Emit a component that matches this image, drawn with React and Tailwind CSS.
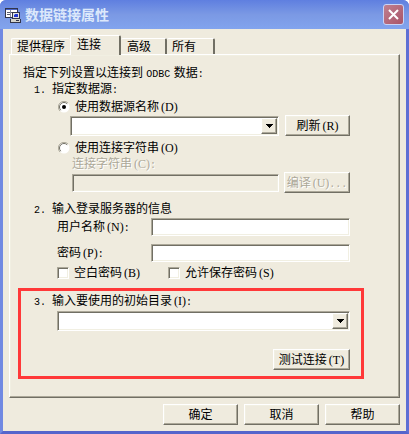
const raised =
  "border border-t-white border-l-white border-r-[#716f64] border-b-[#716f64] shadow-[inset_-1px_-1px_0_#aca899,inset_1px_1px_0_#f1efe2]";
const sunken =
  "border border-t-[#aca899] border-l-[#aca899] border-r-white border-b-white shadow-[inset_1px_1px_0_#716f64,inset_-1px_-1px_0_#f1efe2]";

const Latin = ({ children }) => (
  <span className="font-['Liberation_Mono',monospace] text-[10px] leading-none">{children}</span>
);

// Access key shown after a label
const Key = ({ children }) => (
  <span className="pl-[2px] font-['Liberation_Serif',serif] leading-none">({children})</span>
);

const Button = ({ children, className = "", disabled = false }) => (
  <button
    type="button"
    disabled={disabled}
    className={`${raised} flex items-center justify-center whitespace-nowrap bg-[#efebde] ${
      disabled ? "text-[#aca899] [text-shadow:1px_1px_0_#fff]" : ""
    } ${className}`}
  >
    <span>{children}</span>
  </button>
);

const Select = ({ id, label, className = "" }) => (
  <div className={`relative ${className}`}>
    <select
      id={id}
      aria-label={label}
      defaultValue=""
      className={`${sunken} block h-5 w-full appearance-none bg-white px-1`}
    >
      <option value=""></option>
    </select>
    <span
      className={`${raised} pointer-events-none absolute inset-y-[2px] right-[2px] flex w-4 items-center justify-center bg-[#efebde]`}
    >
      <svg width="7" height="4" viewBox="0 0 7 4" shapeRendering="crispEdges">
        <path d="M0 0h7v1H6v1H5v1H4v1H3V3H2V2H1V1H0z" />
      </svg>
    </span>
  </div>
);

const Radio = ({ label, hint, checked = false }) => (
  <label className="relative flex h-4 items-center gap-[5px]">
    <input
      type="radio"
      name="source"
      defaultChecked={checked}
      className="peer sr-only"
    />
    <svg
      width="12"
      height="12"
      viewBox="0 0 12 12"
      className="[&>circle]:opacity-0 peer-checked:[&>circle]:opacity-100"
    >
      <path d="M6 0.5a5.5 5.5 0 1 1 0 11a5.5 5.5 0 0 1 0-11" fill="#fff" />
      <path d="M2 10A5.5 5.5 0 0 1 10 2" fill="none" stroke="#aca899" />
      <path d="M2.8 9.2A4.5 4.5 0 0 1 9.2 2.8" fill="none" stroke="#716f64" />
      <circle cx="6" cy="6" r="2" fill="#000" />
    </svg>
    <span>
      {label}
      <Key>{hint}</Key>
    </span>
  </label>
);

const Checkbox = ({ label, hint }) => (
  <label className="flex h-4 items-center gap-[5px]">
    <input type="checkbox" className={`${sunken} size-3 appearance-none bg-white`} />
    <span>
      {label}
      <Key>{hint}</Key>
    </span>
  </label>
);

const TextField = ({ id, label, hint, type = "text" }) => (
  <div className="flex items-center">
    <label htmlFor={id} className="w-[94px] shrink-0">
      {label}
      <Key>{hint}</Key>
      <Latin>:</Latin>
    </label>
    <input id={id} type={type} className={`${sunken} h-[18px] min-w-0 flex-1 bg-white px-1`} />
  </div>
);

const StepTitle = ({ number, children }) => (
  <h2 className="flex h-4 items-center">
    <span className="w-[18px]">
      <Latin>{number}.</Latin>
    </span>
    <span>{children}</span>
  </h2>
);

const Tab = ({ children, active = false, className = "" }) => (
  <button
    type="button"
    role="tab"
    aria-selected={active}
    className={`rounded-t-xs border-t border-t-white bg-[#efebde] ${
      active
        ? "relative -mb-px h-5 border-l border-r-2 border-l-white border-r-[#716f64] pb-[2px]"
        : "h-4 pb-px"
    } ${className}`}
  >
    {children}
  </button>
);

const TitleBar = () => (
  <header className="flex h-[29px] items-center justify-between bg-linear-to-b from-[#5f7fe0] via-[#7b99e4] to-[#82a4ee] pr-[5px] pl-[5px]">
    <div className="flex items-center gap-1">
      <svg width="16" height="16" viewBox="0 0 16 16" shapeRendering="crispEdges">
        <path d="M0 1h13v10H0z" fill="#33364a" />
        <path d="M1 2h11v8H1z" fill="#fff" />
        <path d="M1 2h11v1H1z" fill="#4a63c4" />
        <path d="M2 5h3v1H2zM6 5h2v1H6zM2 7h3v1H2z" fill="#5a5d70" />
        <path d="M5 3h1v7H5z" fill="#8a8ea0" />
        <path d="M7 5h8v7H7z" fill="#33364a" />
        <path d="M8 6h6v5H8z" fill="#e4e4e4" />
        <path d="M9 7h4v3H9z" fill="#2438d0" />
        <path d="M9 7h1v1H9z" fill="#7fb4f5" />
        <path d="M5 12h11v4H5z" fill="#33364a" />
        <path d="M6 12h9v3H6z" fill="#d4d4cc" />
        <path d="M11 13h3v1h-3z" fill="#33364a" />
      </svg>
      <h1 className="text-sm font-bold text-[#dce8fb]">数据链接属性</h1>
    </div>
    <button
      type="button"
      aria-label="关闭"
      className="flex size-[21px] items-center justify-center rounded-[3px] border border-[#c9d3f5] bg-linear-to-br from-[#c08090] to-[#a95468]"
    >
      <svg width="11" height="11" viewBox="0 0 11 11" stroke="#fff" strokeWidth="2">
        <path d="M1 1l9 9M10 1l-9 9" />
      </svg>
    </button>
  </header>
);

export default function App() {
  return (
    <div className="overflow-hidden rounded-t-md bg-[#6c80df] font-['Liberation_Sans','Noto_Sans_CJK_SC',sans-serif] text-xs leading-4 text-black">
      <TitleBar />
      <div className="border-3 border-t-0 border-l-[#7189e2] border-r-[#5f70d4] border-b-[#5565cc] bg-[#efebde] px-[6px] pt-[6px] pb-[6px]">
        <div role="tablist" className="flex items-end pl-[2px]">
          <Tab className="w-[59px] border-l border-l-white">提供程序</Tab>
          <Tab active className="w-[51px] pr-3">连接</Tab>
          <Tab className="w-[46px] border-r-2 border-r-[#716f64] pr-2">高级</Tab>
          <Tab className="w-[48px] border-r-2 border-r-[#716f64] pr-3">所有</Tab>
        </div>

        <main className={`${raised} pt-[10px] pr-[35px] pb-[18px] pl-2`}>
          <p className="h-4 pl-[5px]">
            指定下列设置以连接到 <Latin>ODBC</Latin> 数据<Latin>:</Latin>
          </p>

          <section className="pr-[14px] pl-4">
            <StepTitle number="1">
              指定数据源<Latin>:</Latin>
            </StepTitle>
            <div className="pt-[2px] pl-6">
              <Radio label="使用数据源名称" hint="D" checked />
              <div className="flex items-center gap-[6px] pl-3">
                <Select label="数据源名称" className="flex-1" />
                <Button className="h-[21px] w-[65px]">
                  刷新<Key>R</Key>
                </Button>
              </div>
              <div className="pt-1">
                <Radio label="使用连接字符串" hint="O" />
              </div>
              <label
                htmlFor="connection"
                className="block h-4 pl-[14px] text-[#aca899] [text-shadow:1px_1px_0_#fff]"
              >
                连接字符串<Key>C</Key>
                <Latin>:</Latin>
              </label>
              <div className="flex items-center gap-[5px] pl-[14px]">
                <input
                  id="connection"
                  type="text"
                  disabled
                  className={`${sunken} h-[18px] min-w-0 flex-1 bg-[#efebde]`}
                />
                <Button disabled className="h-[21px] w-[66px]">
                  编译<Key>U</Key>
                  <Latin>...</Latin>
                </Button>
              </div>
            </div>
          </section>

          <section className="pt-2 pr-[14px] pl-4">
            <StepTitle number="2">输入登录服务器的信息</StepTitle>
            <div className="flex flex-col gap-2 pt-px pl-[23px]">
              <TextField id="user" label="用户名称" hint="N" />
              <TextField id="password" label="密码" hint="P" type="password" />
            </div>
            <div className="flex gap-7 pt-[3px] pl-[23px]">
              <Checkbox label="空白密码" hint="B" />
              <Checkbox label="允许保存密码" hint="S" />
            </div>
          </section>

          <section className="mt-[7px] border-3 border-[#ff3838] pt-[2px] pr-[11px] pb-[6px] pl-[13px]">
            <StepTitle number="3">
              <label htmlFor="catalog">
                输入要使用的初始目录<Key>I</Key>
                <Latin>:</Latin>
              </label>
            </StepTitle>
            <Select id="catalog" className="mt-[2px] ml-[23px]" />
            <div className="flex justify-end pt-[18px]">
              <Button className="h-[21px] w-[77px]">
                测试连接<Key>T</Key>
              </Button>
            </div>
          </section>
        </main>

        <footer className="flex justify-end gap-[6px] pt-[6px]">
          <Button className="h-[21px] w-[75px]">确定</Button>
          <Button className="h-[21px] w-[75px]">取消</Button>
          <Button className="h-[21px] w-[75px]">帮助</Button>
        </footer>
      </div>
    </div>
  );
}
